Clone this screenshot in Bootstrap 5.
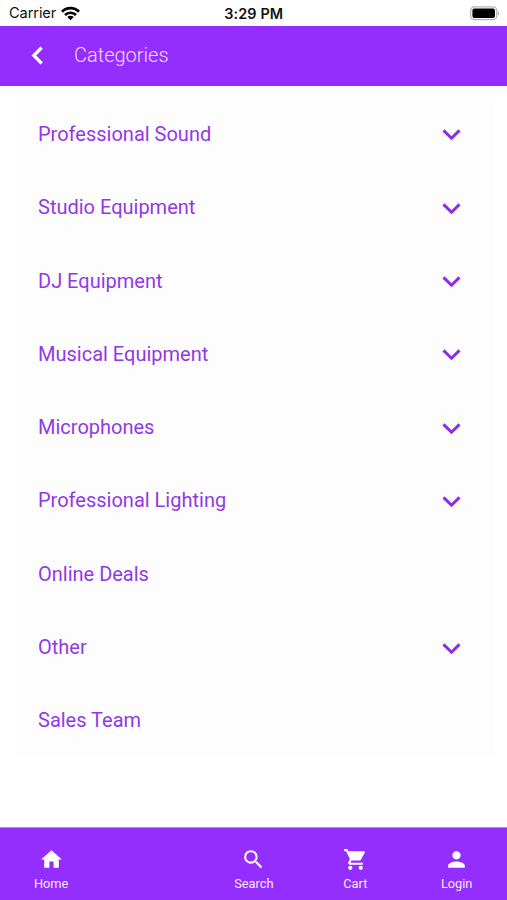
<!DOCTYPE html>
<html lang="en">
<head>
<meta charset="utf-8">
<meta name="viewport" content="width=device-width, initial-scale=1">
<title>Categories</title>
<link href="https://cdn.jsdelivr.net/npm/bootstrap@5.3.0/dist/css/bootstrap.min.css" rel="stylesheet">
<style>
  body { font-family: Roboto, "Liberation Sans", sans-serif; background: #fff; }
  .screen { height: 900px; overflow: hidden; }
  .status { height: 25.5px; padding: 2px 7px 0 9px; font: 15px/1 Inter, "Liberation Sans", sans-serif; color: #111; }
  .status > * { flex: 1 1 0; }
  .carrier { font-size: 14.6px; letter-spacing: -.1px; }
  .clock { font-size: 14.4px; letter-spacing: .1px; padding-right: 1.5px; }
  .topbar { height: 60.5px; background: #932eff; padding: 0 0 1px 25px; }
  .topbar h1 { font-size: 20px; font-weight: 300; line-height: 1; color: #f3d9ff; margin-left: 24px; }
  .categories { margin: 11.3px 12px 0 16px; background: #fefdfe; }
  .categories .list-group-item { height: 73.3px; padding: 0 30px 0 22px; background: transparent; color: #9139e6; font-size: 20px; line-height: 1; }
  .tabs { height: 73px; background: #932eff; border-top: 1px solid #b58be0; }
  .tabs .nav-link { padding: 19px 0 0 .8px; color: #fae8ff; font-size: 12.8px; line-height: 1; }
  .tabs svg { display: block; margin: 0 auto 6px; color: #fff; }
</style>
</head>
<body>
<div class="screen d-flex flex-column">
  <div class="status d-flex align-items-center">
    <div class="d-flex align-items-center gap-1">
      <span class="carrier">Carrier</span>
      <svg width="21" height="15" viewBox="0 0 21 15" fill="none" stroke="#000" stroke-width="2.7"><path d="M2 5.7a12 12 0 0 1 17 0M5 9a7.8 7.8 0 0 1 11 0"/><path d="M10.5 14.2 7.3 11.1a4.6 4.6 0 0 1 6.4 0z" fill="#000" stroke="none"/></svg>
    </div>
    <div class="clock fw-semibold text-center text-nowrap">3:29 PM</div>
    <div class="d-flex justify-content-end">
      <svg width="30" height="15" viewBox="0 0 30 15"><rect x=".7" y=".9" width="26" height="12.8" rx="3.6" fill="#fff" stroke="#b5b5b5" stroke-width="1.2"/><rect x="2.4" y="2.6" width="22.6" height="9.4" rx="2"/><path d="M27.8 5v4.6c1.7-.7 1.7-3.9 0-4.6z" fill="#aaa"/></svg>
    </div>
  </div>
  <header class="topbar d-flex align-items-center">
    <svg width="25" height="25" viewBox="0 0 24 24" fill="none" stroke="#fff" stroke-width="3.2"><path d="m16 4.5-7.5 7.5 7.5 7.5"/></svg>
    <h1 class="mb-0">Categories</h1>
  </header>
  <main class="flex-grow-1">
    <ul class="categories list-group list-group-flush">
      <li class="list-group-item border-0 d-flex align-items-center justify-content-between"><span>Professional Sound</span><svg width="27" height="27"><use href="#down"/></svg></li>
      <li class="list-group-item border-0 d-flex align-items-center justify-content-between"><span>Studio Equipment</span><svg width="27" height="27"><use href="#down"/></svg></li>
      <li class="list-group-item border-0 d-flex align-items-center justify-content-between"><span>DJ Equipment</span><svg width="27" height="27"><use href="#down"/></svg></li>
      <li class="list-group-item border-0 d-flex align-items-center justify-content-between"><span>Musical Equipment</span><svg width="27" height="27"><use href="#down"/></svg></li>
      <li class="list-group-item border-0 d-flex align-items-center justify-content-between"><span>Microphones</span><svg width="27" height="27"><use href="#down"/></svg></li>
      <li class="list-group-item border-0 d-flex align-items-center justify-content-between"><span>Professional Lighting</span><svg width="27" height="27"><use href="#down"/></svg></li>
      <li class="list-group-item border-0 d-flex align-items-center"><span>Online Deals</span></li>
      <li class="list-group-item border-0 d-flex align-items-center justify-content-between"><span>Other</span><svg width="27" height="27"><use href="#down"/></svg></li>
      <li class="list-group-item border-0 d-flex align-items-center"><span>Sales Team</span></li>
    </ul>
  </main>
  <nav class="tabs nav row row-cols-5 g-0 text-center">
    <a class="nav-link col" href="#"><svg width="25" height="25" viewBox="0 0 24 24" fill="currentColor"><path d="M10 20v-6h4v6h5v-8h3L12 3 2 12h3v8z"/></svg>Home</a>
    <span class="col"></span>
    <a class="nav-link col" href="#"><svg width="25" height="25" viewBox="0 0 24 24" fill="currentColor"><path d="M15.5 14h-.79l-.28-.27A6.47 6.47 0 0 0 16 9.5 6.5 6.5 0 1 0 9.5 16c1.61 0 3.09-.59 4.23-1.57l.27.28v.79l5 4.99L20.49 19l-4.99-5zm-6 0C7.01 14 5 11.99 5 9.5S7.01 5 9.5 5 14 7.01 14 9.5 11.99 14 9.5 14z"/></svg>Search</a>
    <a class="nav-link col" href="#"><svg width="25" height="25" viewBox="0 0 24 24" fill="currentColor"><path d="M7 18c-1.1 0-1.99.9-1.99 2S5.9 22 7 22s2-.9 2-2-.9-2-2-2zM1 2v2h2l3.6 7.59-1.35 2.45c-.16.28-.25.61-.25.96 0 1.1.9 2 2 2h12v-2H7.42c-.14 0-.25-.11-.25-.25l.03-.12.9-1.63h7.45c.75 0 1.41-.41 1.75-1.03l3.58-6.49A1 1 0 0 0 20 4H5.21l-.94-2H1zm16 16c-1.1 0-1.99.9-1.99 2s.89 2 1.99 2 2-.9 2-2-.9-2-2-2z"/></svg>Cart</a>
    <a class="nav-link col" href="#"><svg width="25" height="25" viewBox="0 0 24 24" fill="currentColor"><path d="M12 12c2.21 0 4-1.79 4-4s-1.79-4-4-4-4 1.79-4 4 1.79 4 4 4zm0 2c-2.67 0-8 1.34-8 4v2h16v-2c0-2.66-5.33-4-8-4z"/></svg>Login</a>
  </nav>
</div>
<svg class="d-none"><symbol id="down" viewBox="0 0 27 27"><path d="m5.5 10.4 8 7.8 8-7.8" fill="none" stroke="#8d2bec" stroke-width="3"/></symbol></svg>
<script src="https://cdn.jsdelivr.net/npm/bootstrap@5.3.0/dist/js/bootstrap.bundle.min.js"></script>
</body>
</html>
